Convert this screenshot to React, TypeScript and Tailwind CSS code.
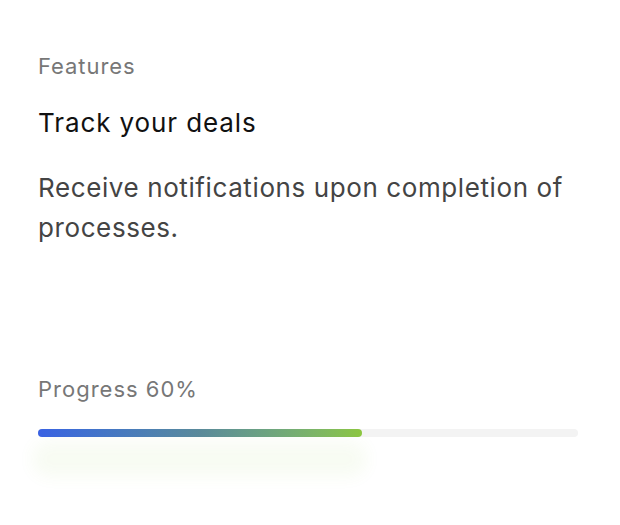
export default function App() {
  const pct = 60;
  return (
    <div className="w-[620px] h-[525px] bg-white" style={{ fontFamily: "Inter, 'Liberation Sans', sans-serif" }}>
      <div className="pl-[38px] pr-[40px] pt-[52px]">
        <div className="text-[22px] leading-[28px] tracking-[0.95px] text-[#777777]">Features</div>
        <div className="mt-[28px] text-[26px] leading-[30px] tracking-[0.9px] text-[#111111]">Track your deals</div>
        <div className="mt-[30px] text-[26px] leading-[40px] tracking-[0.6px] text-[#444444]">
          Receive notifications upon completion of processes.
        </div>
        <div className="mt-[127px] text-[22px] leading-[28px] tracking-[1px] text-[#777777]">Progress {pct}%</div>
        <div className="relative mt-[26px] h-[8px] w-[540px] rounded-full bg-[#f3f3f3]">
          <div
            className="absolute left-[-6px] top-[12px] h-[36px] rounded-full bg-[#8cc63f] opacity-[0.06] blur-[8px]"
            style={{ width: `${pct + 2}%` }}
          />
          <div
            className="relative h-full rounded-full bg-gradient-to-r from-[#3a62e3] via-[#5a8a9a] to-[#8cc63f]"
            style={{ width: `${pct}%` }}
          />
        </div>
      </div>
    </div>
  );
}
